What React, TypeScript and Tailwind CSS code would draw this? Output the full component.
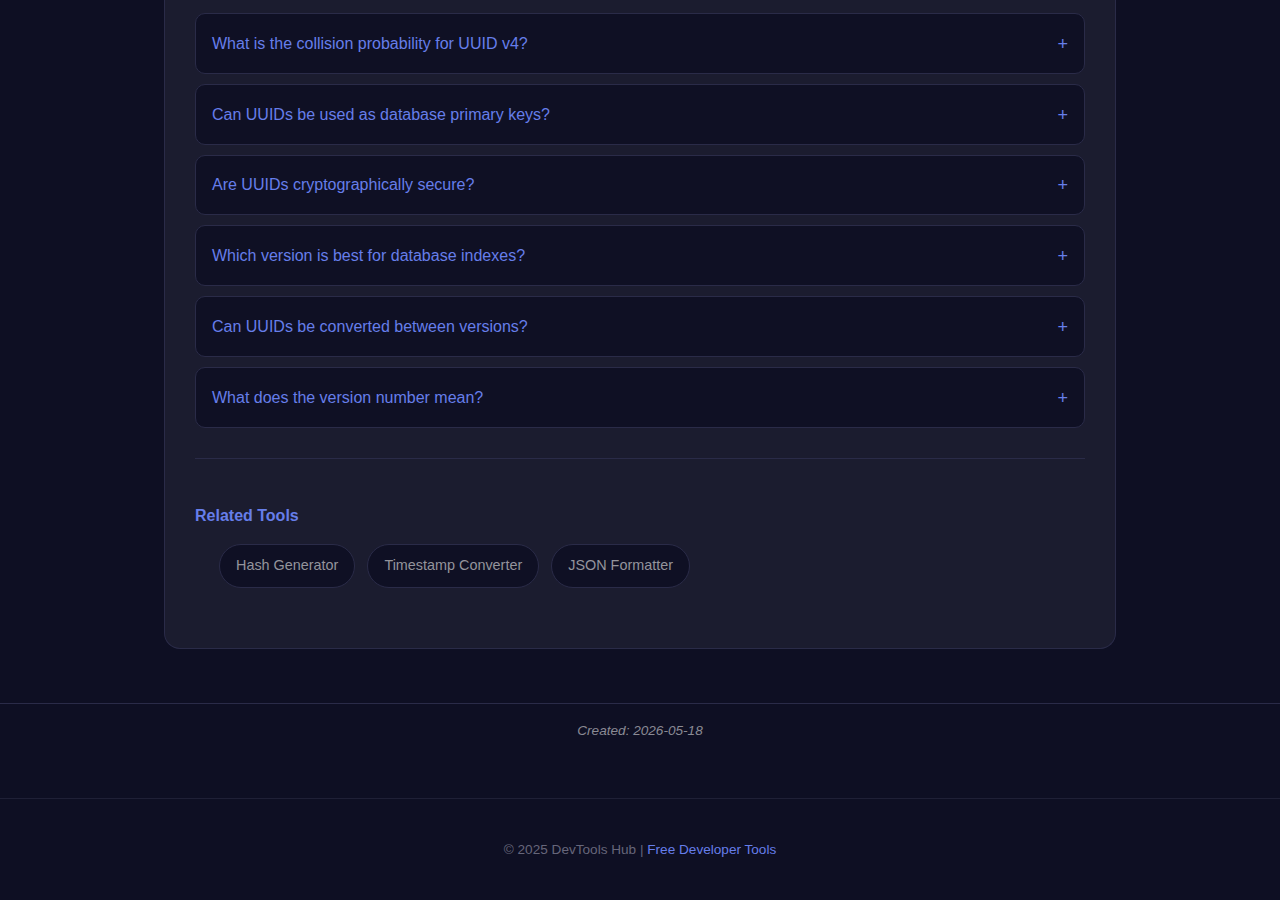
const faqs = [
  "What is the collision probability for UUID v4?",
  "Can UUIDs be used as database primary keys?",
  "Are UUIDs cryptographically secure?",
  "Which version is best for database indexes?",
  "Can UUIDs be converted between versions?",
  "What does the version number mean?",
];

const tools = ["Hash Generator", "Timestamp Converter", "JSON Formatter"];

export default function App() {
  return (
    <div
      className="min-h-[900px] bg-[#0e0f23] text-[#e0e0e0]"
      style={{ fontFamily: '"Liberation Sans", Arial, sans-serif' }}
    >
      <main className="mx-auto w-[952px] rounded-b-[16px] border-x border-b border-[#2a2b48] bg-[#1b1c2f] px-[30px] pb-[60px] pt-[13px]">
        <section className="flex flex-col gap-[10px]">
          {faqs.map((q) => (
            <div
              key={q}
              className="flex h-[60.8px] items-center justify-between rounded-[10px] border border-[#2a2b48] bg-[#0f1024] px-4 pt-px"
            >
              <span className="text-[16px] text-[#667eea]">{q}</span>
              <span className="text-[18px] leading-none text-[#667eea]">+</span>
            </div>
          ))}
        </section>

        <hr className="mt-[30px] border-t border-[#2a2b48]" />

        <section className="mt-[48px]">
          <h3 className="text-[16px] font-bold leading-[18px] text-[#667eea]">Related Tools</h3>
          <ul className="mt-[19px] flex gap-3 pl-6">
            {tools.map((t) => (
              <li
                key={t}
                className="flex h-[44px] items-center rounded-full border border-[#2a2b48] bg-[#0f1024] px-4 pt-px text-[14.4px] text-[#94949c]"
              >
                {t}
              </li>
            ))}
          </ul>
        </section>
      </main>

      <div className="mt-[54px] border-t border-[#2a2b48] pb-[59px] pt-[19px] text-center">
        <p className="text-[13.6px] italic leading-[16px] text-[#8a8a94]">Created: 2026-05-18</p>
      </div>

      <footer className="border-t border-[#1f2036] pt-[43px] text-center text-[13.6px] leading-[16px] text-[#66667a]">
        © 2025 DevTools Hub | <span className="text-[#667eea]">Free Developer Tools</span>
      </footer>
    </div>
  );
}
